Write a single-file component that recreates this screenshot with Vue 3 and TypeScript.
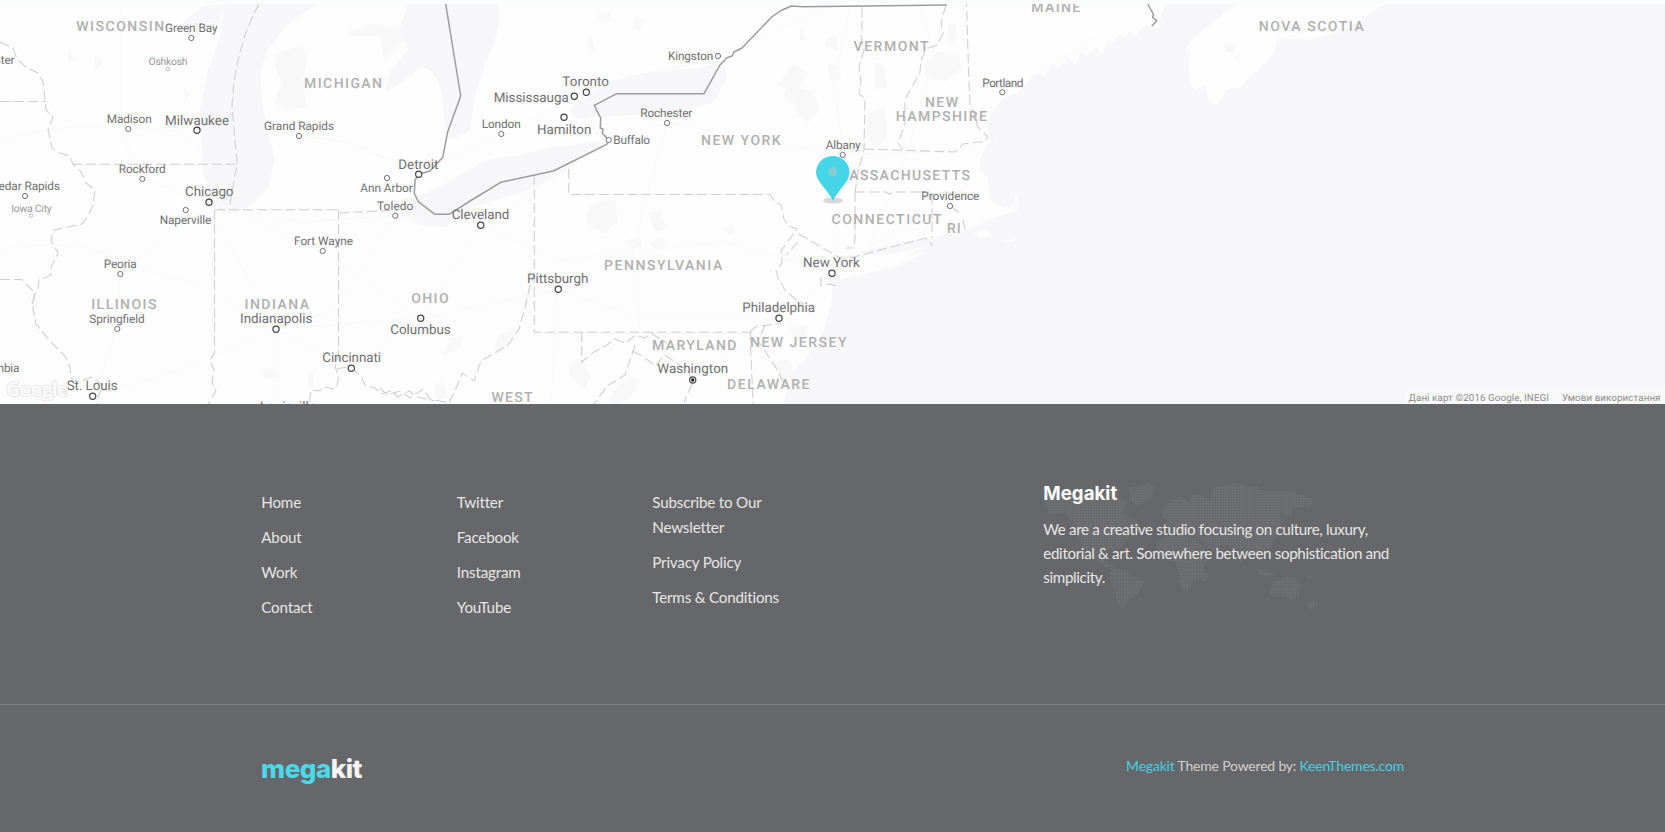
<script setup lang="ts">
type Size = 's' | 'm' | 'l'
interface City { name: string; x: number; y: number; w: number; cx: number; cy: number; size: Size }
interface Region { name: string; x: number; y: number; w: number }

const c = (name: string, x: number, y: number, w: number, cx: number, cy: number, size: Size): City =>
  ({ name, x, y, w, cx, cy, size })
const r = (name: string, x: number, y: number, w: number): Region => ({ name, x, y, w })

const cities: City[] = [
  c('Green Bay', 165, 32.3, 52.5, 191.3, 38, 'm'),
  c('Oshkosh', 148.5, 64.7, 39, 167.7, 69, 's'),
  c('Rochester', -37.5, 64, 52, -12, 70, 'm'),
  c('Madison', 106.7, 122.7, 45, 128.3, 129, 'm'),
  c('Milwaukee', 165, 124.7, 64, 197, 130.3, 'l'),
  c('Grand Rapids', 264, 130, 70, 299, 136, 'm'),
  c('Rockford', 118.7, 173, 47, 142.3, 179, 'm'),
  c('Cedar Rapids', -9, 190, 69, 25, 196, 'm'),
  c('Chicago', 185, 196, 48.5, 209, 202.3, 'l'),
  c('Ann Arbor', 360.3, 192.3, 52.4, 387, 178, 'm'),
  c('Toledo', 377, 210, 36.3, 395.3, 215.7, 'm'),
  c('Detroit', 398.3, 168.7, 40, 418.7, 174.3, 'l'),
  c('Iowa City', 11.3, 211.7, 40.4, 31, 215.7, 's'),
  c('Naperville', 159.7, 224, 51.6, 185.7, 210, 'm'),
  c('Fort Wayne', 294, 245, 59, 322.7, 251, 'm'),
  c('Peoria', 103.7, 268, 33, 120.3, 274, 'm'),
  c('Springfield', 89.3, 323, 55.4, 117.3, 329, 'm'),
  c('Indianapolis', 240, 323, 72.3, 276, 329.3, 'l'),
  c('Columbus', 390.3, 334, 60.4, 420.7, 318.3, 'l'),
  c('Cincinnati', 322.3, 362, 58.7, 351.3, 368.3, 'l'),
  c('Columbia', -29, 372, 48.3, -5, 378, 'm'),
  c('St. Louis', 66.7, 390, 51, 92.7, 396.3, 'l'),
  c('Louisville', 260, 411, 56, 288, 418, 'l'),
  c('Toronto', 562.3, 85.7, 46.7, 586.3, 92.3, 'l'),
  c('Mississauga', 493.7, 102, 75, 574.3, 96.3, 'l'),
  c('Hamilton', 537, 133.7, 54.3, 564, 117.3, 'l'),
  c('London', 481.7, 128, 39, 501.3, 134, 'm'),
  c('Kingston', 668, 60.3, 45.3, 718, 56, 'm'),
  c('Rochester', 640.3, 117, 52, 667, 123, 'm'),
  c('Buffalo', 613.3, 144, 36.8, 608.7, 140, 'm'),
  c('Cleveland', 451.7, 219, 57.6, 480.7, 225.3, 'l'),
  c('Pittsburgh', 527, 283, 61.3, 558.3, 289.3, 'l'),
  c('Washington', 657.2, 373, 71, 692.7, 380, 'l'),
  c('Philadelphia', 742.3, 312, 72.7, 779, 318.3, 'l'),
  c('New York', 803, 267, 56.7, 832, 273.3, 'l'),
  c('Portland', 982.3, 87, 41, 1002.3, 92.3, 'm'),
  c('Albany', 825.7, 149, 35, 842.7, 155, 'm'),
  c('Providence', 921.3, 200, 58, 950, 206, 'm'),
]

const regions: Region[] = [
  r('WISCONSIN', 76.2, 31.3, 88), r('MICHIGAN', 304, 88.3, 78), r('ILLINOIS', 91.2, 309, 65.3),
  r('INDIANA', 244.5, 309, 64.5), r('OHIO', 411.3, 303, 37.3), r('NEW YORK', 701, 145, 79.7),
  r('PENNSYLVANIA', 604, 270, 118.3), r('MARYLAND', 652, 350, 84.5), r('NEW JERSEY', 750, 347, 96.5),
  r('DELAWARE', 727, 389, 82.5), r('WEST', 491.5, 402, 41), r('CONNECTICUT', 831.5, 224, 110),
  r('RI', 947, 233, 13.6), r('VERMONT', 853.6, 51, 75), r('MAINE', 1031.3, 12, 48.9),
  r('NEW', 925, 106.7, 33), r('HAMPSHIRE', 895.8, 121, 91), r('MASSACHUSETTS', 835.5, 180, 134.5),
  r('NOVA SCOTIA', 1258.7, 31, 105),
]

const radius: Record<Size, number> = { s: 1.7, m: 2.6, l: 3.1 }

const water = [
  'M225 4L220 37L207 73L200 110L202 150L203 173L213 197L218 208L222 214L240 212L250 206L267 190L275 160L266 123L262 100L260 73L268 48L290 22L318 4Z',
  'M178 28L188 18L205 6L225 4L219 24L206 22L192 28Z',
  'M408 4H498Q503 25 487 60L475 95L470 130L452 140L445 130L443 100Q437 68 422 67L405 80L385 93L390 72L408 50L400 28Z',
  'M400 200L427 193L463 173L487 160L520 155L553 147L593 142L609 142L593 153L567 170L537 187L507 197L463 210L447 227L420 225L403 213Z',
  'M570 110L587 97L610 82L647 72L697 68L723 62L727 77L713 103L670 113L633 115L593 117L577 120Z',
  'M1165 4L1158 28L1150 28L1145 25L1136 36L1130 31L1124 37L1120 34L1113 43L1107 41L1102 54L1096 48L1087 55L1081 51L1076 65L1068 58L1060 67L1053 64L1044 76L1036 73L1027 83L1018 93L1005 97L993 110L987 123L990 140L980 160L979 170L987 177L990 200L1003 208L1015 205V195L1008 190L1017 195V211L993 218L967 230L933 237L893 243L860 252L838 258L838 272L828 279L832 285L832 300L823 333L810 353L790 377L783 404H1665V4Z',
]

const islands = [
  'M840 280L893 267L917 257L927 251L905 257L926 246L897 253L860 257L840 268Z',
  'M973 234L985 229L992 236L980 237Z',
  'M1003 241L1016 238L1014 242Z',
  'M1237 4L1218 18L1207 27L1193 38L1184 52L1190 51L1188 66L1190 84L1195 90L1205 85L1208 98L1212 104L1219 104L1227 89L1239 88L1247 80L1260 68L1274 54L1277 38L1307 40L1341 32L1365 17L1385 4Z',
]

const parks = [
  'M275 54L301 45L308 55L303 78L307 107L288 110L274 103L281 82L276 67Z',
  'M347 32L370 24L415 29L415 40L396 43L380 36L349 36Z',
  'M380 35L398 25L400 44L384 60Z',
  'M586 212L595 202L615 200L618 220L605 234L588 225Z',
  'M648 213L660 209L666 228L655 232Z M624 241L640 236L642 246L631 249Z M648 242L660 237L670 245L656 250Z',
  'M724 227L733 225L734 234L727 233Z',
  'M592 36L595 52L586 47Z M635 17L643 19L639 32L633 28Z M596 15L610 13L611 22L598 21Z',
  'M782 80L792 64L808 72L799 88L814 92L819 111L808 122L796 116L797 104L783 98L786 89L776 84Z',
  'M827 63L838 66L841 79L830 81Z M800 27L806 41L800 39Z M827 38L838 37L836 50L825 46Z',
  'M924 65L938 52L960 55L961 69L946 81L926 78Z M948 24L956 25L955 44L949 42Z',
  'M868 114L885 106L887 138L873 148L866 133Z M874 62L884 65L887 88L876 89Z',
  'M498 335L514 330L513 342L501 351L495 349Z M450 338L463 336L461 347L443 355Z',
  'M568 363L582 359L591 376L584 390L570 376Z',
  'M618 386L630 378L641 379L630 398L617 404L608 401Z',
  'M788 327L807 324L808 337L797 342Z M773 362L788 359L795 374L782 382Z',
  'M69 47L75 60L68 64Z M94 56L104 61L96 71Z M184 88L190 93L186 102Z',
  'M434 384L444 382L448 397L438 400Z M262 371L278 368L280 378L264 378Z M308 372L313 372V389L308 386Z',
]

const roads = [
  'M0 140C80 120 105 128 152 129S205 147 207 202L275 329L351 368L420 319L558 289L640 318L780 318L832 273',
  'M120 4V130L142 179L209 202C250 213 265 230 323 251L420 319',
  'M0 250C100 230 122 270 194 282L276 329L277 404',
  'M93 396L117 329L120 274L209 202', 'M209 202L300 222L395 216L481 225L558 260L724 242L832 273',
  'M299 136L350 142L419 174L502 134L574 98L586 92L718 56L830 6',
  'M481 225L609 140L667 123L843 155L978 150', 'M421 318L480 226', 'M276 329L420 318',
  'M93 396L180 370L276 329L336 309L395 216', 'M558 289L551 404', 'M692 380L780 318L832 273L870 246L950 206L990 150L1030 80L1100 35',
  'M843 155L834 80L850 8', 'M832 273L845 155', 'M692 380L640 330L632 250L667 123', 'M870 246L908 150L934 55L920 5',
]

const boundaries = [
  'M0 42L13 48L17 59L27 68L38 73L43 82L45 101L46 110L53 117L48 130L52 148L60 153L69 156L73 164L81 172L86 183L95 190L93 205L88 216L82 224L54 230L51 240L58 253L51 267V275L39 280L38 290L34 295L33 309L36 324L50 341L66 357L70 368L71 378L79 382L91 377L103 385L98 397L97 404',
  'M0 101.5H46', 'M72 164.2H237', 'M259 4Q235 48 232 106L237 164L229 210', 'M0 279.5H22L28 286L33 291L35 295L32 304',
  'M215 209.7H338L340 213L398 210', 'M214.5 210V353L210 360L214 370L212 382L216 391L208 404', 'M338.5 210V355L335 367L339 376L336 389L323 387L320 391L311 390L309 404',
  'M337 369L346 367L354 370L361 376L365 385L375 388L381 394L391 391L398 397L409 391L417 397L435 401',
  'M380 388L387 395L400 391L410 398L423 389L430 399L449 403L457 386L462 373L474 381L481 361L495 353L508 345L519 329L526 304L530 285L534 275',
  'M534.3 175V332.3H750', 'M568.7 169V194.5H770L775 202L781 205L784 219L789 226L797 229L781 251L782 263L776 271L779 280L785 290L795 299L804 304',
  'M799 234L840 258', 'M850 258L926 238L933 246', 'M750 332L755 327L781 323', 'M765 325L758 341L765 351L778 371L784 383',
  'M750.7 332V350L753 404', 'M581.7 332V362L594 352L607 345L614 339L625 343L636 335L644 338L652 334L667 343',
  'M633 351L642 356L656 366L664 355L674 361L688 371L693 382L684 402', 'M635 345L630 360L625 375L607 386L594 404',
  'M862 7V29L861 35L864 50L861 60L859 68L861 82L859 94L865 98L864 150L858 172L855 193', 'M855 192H886L889 194L893 192H920', 'M920 192H932V238', 'M855 192V240L853 248L846 248',
  'M946 5L941 22L943 33L937 45L926 49L921 60L920 72L911 89L905 99V125L898 143L903 150',
  'M864 149L955 152L963 144L978 142H984L988 137L977 126L976 117L970 105L969 82L966.5 4',
  'M798 242L786 255', 'M951 206L961 215M963 220L965 230', 'M821 277V286L829 284L837 286',
]

const linkColumns: string[][] = [
  ['Home', 'About', 'Work', 'Contact'],
  ['Twitter', 'Facebook', 'Instagram', 'YouTube'],
  ['Subscribe to Our Newsletter', 'Privacy Policy', 'Terms & Conditions'],
]
</script>

<template>
  <div class="page">
    <section class="map">
      <svg class="canvas" viewBox="0 4 1665 400" width="1665" height="400">
        <path v-for="d in parks" :key="d" :d="d" class="park" />
        <path v-for="d in water" :key="d" :d="d" class="water" />
        <path v-for="d in islands" :key="d" :d="d" class="land" />
        <path d="M1223 42L1233 44L1235 51L1226 52Z M1235 55L1241 58L1236 61Z" class="water" />
        <path v-for="d in roads" :key="d" :d="d" class="road" />
        <path v-for="d in boundaries" :key="d" :d="d" class="boundary" />
        <path
          class="frontier"
          d="M445.7 4L460.7 96L447.7 131.7L442.7 157.3L439.3 161L430 171L418.7 174.3L415 180L414.3 193.3L418.3 201.7L435 214.3H449L471.7 200L500.7 182.3L553.3 171L606.7 144.3L608.7 140L602.3 133L603 129L600.3 128L600.7 118L594.3 105.3L616.7 93.7H704L720 65L726.7 58L732 56L734 52L742 48L771.7 17L782 10L791.7 6L803 6.7L946.7 5"
        />
        <path class="frontier" d="M1147.7 4L1153.3 14L1152.7 17.5L1156.7 20.7L1151.7 26.3" />
        <text
          v-for="g in regions" :key="g.name + g.x" :x="g.x" :y="g.y" :textLength="g.w"
          class="region"
        >{{ g.name }}</text>
        <g v-for="p in cities" :key="p.name + p.x" :class="['city', p.size]">
          <circle :cx="p.cx" :cy="p.cy" :r="radius[p.size]" />
          <text :x="p.x" :y="p.y" :textLength="p.w">{{ p.name }}</text>
        </g>
        <circle cx="692.7" cy="380" r="1.7" class="capital" />
        <text x="6" y="396" textLength="62" class="brand">Google</text>
        <ellipse cx="833" cy="200.6" rx="10" ry="3" class="pin-shadow" />
        <path d="M833 201C829 191 816 182 816 172.5A16.8 16.5 0 0 1 849.6 172.5C849.6 182 837 191 833 201Z" class="pin" />
        <circle cx="832.8" cy="171.8" r="4.6" class="pin-dot" />
        <path d="M1410 388H1665V404H1402Z" class="credit-bg" />
        <text x="1408.5" y="400.7" textLength="140.5" class="credit">Дані карт ©2016 Google, INEGI</text>
        <text x="1562" y="400.7" textLength="98.5" class="credit">Умови використання</text>
      </svg>
    </section>

    <footer class="footer">
      <div class="upper">
        <ul v-for="(links, i) in linkColumns" :key="i" class="links">
          <li v-for="link in links" :key="link"><a>{{ link }}</a></li>
        </ul>
        <div class="about">
          <svg class="world" viewBox="0 0 280 126" width="280" height="126">
            <defs>
              <pattern id="dots" width="2.7" height="2.7" patternUnits="userSpaceOnUse">
                <rect width="1.9" height="1.9" />
              </pattern>
            </defs>
            <path
              fill="url(#dots)"
              d="M0 12L14 8L36 10L58 4L76 2L74 14L84 18L80 28L92 36L100 46L88 50L80 62L70 66L62 64L60 76L70 82L78 88L64 84L50 74L38 60L34 44L24 30L6 30Z
              M86 4L106 0L112 4L108 14L96 22L88 18Z
              M68 86L84 86L90 92L102 97L96 108L86 116L80 126L74 118L70 102L66 92Z
              M118 28L126 18L138 12L146 18L150 10L166 14L170 4L190 0L214 2L222 8L250 8L270 14L268 22L250 24L248 32L236 28L240 44L232 54L226 66L216 66L220 78L212 74L206 66L198 78L190 64L178 60L170 68L158 56L150 52L142 46L132 48L120 46L126 36L120 34Z
              M118 54L134 50L152 54L164 68L170 70L162 80L160 92L150 98L144 108L138 104L136 90L132 78L118 74L112 64Z
              M162 88L166 90L162 98L158 96Z
              M214 84L222 86L232 90L226 92L216 90Z
              M230 98L244 92L252 94L258 102L256 112L248 116L242 112L230 112L226 108Z
              M262 90L270 94L264 96Z M270 116L276 118L268 125L264 122Z"
            />
          </svg>
          <h2>Megakit</h2>
          <p>We are a creative studio focusing on culture, luxury, editorial &amp; art. Somewhere between sophistication and simplicity.</p>
        </div>
      </div>
      <div class="lower">
        <svg class="logo" width="110" height="36" viewBox="0 0 110 36">
          <text x="0" y="25" textLength="101.5"><tspan class="accent">mega</tspan><tspan>kit</tspan></text>
        </svg>
        <p class="powered"><a>Megakit</a> Theme Powered by: <a>KeenThemes.com</a></p>
      </div>
    </footer>
  </div>
</template>

<style>
body { margin: 0; background: #65676a; }
</style>

<style scoped>
.page { width: 1665px; height: 832px; overflow: hidden; background: #65676a; font-family: Lato, sans-serif; }
.map { height: 400px; padding-top: 4px; background: #fbfcfc; }
.canvas { display: block; background: #fdfdfd; font-family: Roboto, sans-serif; text-rendering: geometricPrecision; }
.park { fill: #f8f8f9; }
.water { fill: #f7f7f9; }
.land { fill: #fdfdfd; }
.road { fill: none; stroke: #fafafa; stroke-width: 1; }
.boundary { fill: none; stroke: #d0d0d0; stroke-width: 1.1; stroke-dasharray: 10 4; }
.frontier { fill: none; stroke: #9c9c9c; stroke-width: 1.5; stroke-linejoin: round; }
.region { font-size: 14px; font-weight: 500; fill: #b0b0b0; }
.city circle { fill: #fff; stroke: #737373; stroke-width: 1; }
.city text { font-size: 11.8px; fill: #707070; }
.city.l text { font-size: 13.4px; }
.city.l circle { stroke: #444; stroke-width: 1.2; }
.city.s text { font-size: 10.4px; fill: #999; }
.city.s circle { stroke: #aaa; stroke-width: 0.8; }
.capital { fill: #222; }
.brand { font-family: 'Open Sans', sans-serif; font-size: 19px; font-weight: 600; fill: #fff; stroke: #e2e2e2; stroke-width: 1.6; paint-order: stroke; }
.pin { fill: #45d5e6; }
.pin-dot { fill: #85cdd5; }
.pin-shadow { fill: #d8d8d8; }
.credit-bg { fill: #f9f9fa; }
.credit { font-size: 9.8px; fill: #8b8b8b; }

.footer { color: #e6e6e6; font-variant-ligatures: none; }
.upper { display: grid; grid-template-columns: 195.5px 195.5px 391px 361px; padding: 86px 0 0 261.3px; height: 214px; border-bottom: 1px solid #7c7e80; }
.links { list-style: none; margin: 0; padding: 0; width: 150px; font-size: 15.2px; line-height: 25px; letter-spacing: -0.2px; }
.links li { margin-bottom: 10px; }
.about { position: relative; }
.world { position: absolute; left: 0; top: -6px; fill: #707275; }
.about h2 { position: relative; margin: -8px 0 11px; font: 700 18.7px/24px Inter, sans-serif; letter-spacing: 0; color: #fff; }
.about p { position: relative; margin: 0; width: 356px; font-size: 15.2px; line-height: 24.2px; letter-spacing: -0.36px; }
.lower { display: flex; justify-content: space-between; align-items: flex-start; width: 1143px; padding: 48px 0 0 261px; }
.logo { display: block; overflow: visible; font: 800 26px Inter, sans-serif; fill: #f4f4f4; }
.accent { fill: #4ad9e8; }
.powered { margin: 1px 0 0; font-size: 14px; line-height: 24px; letter-spacing: -0.2px; color: #cfcfcf; }
.powered a { color: #45d0e0; }
</style>
